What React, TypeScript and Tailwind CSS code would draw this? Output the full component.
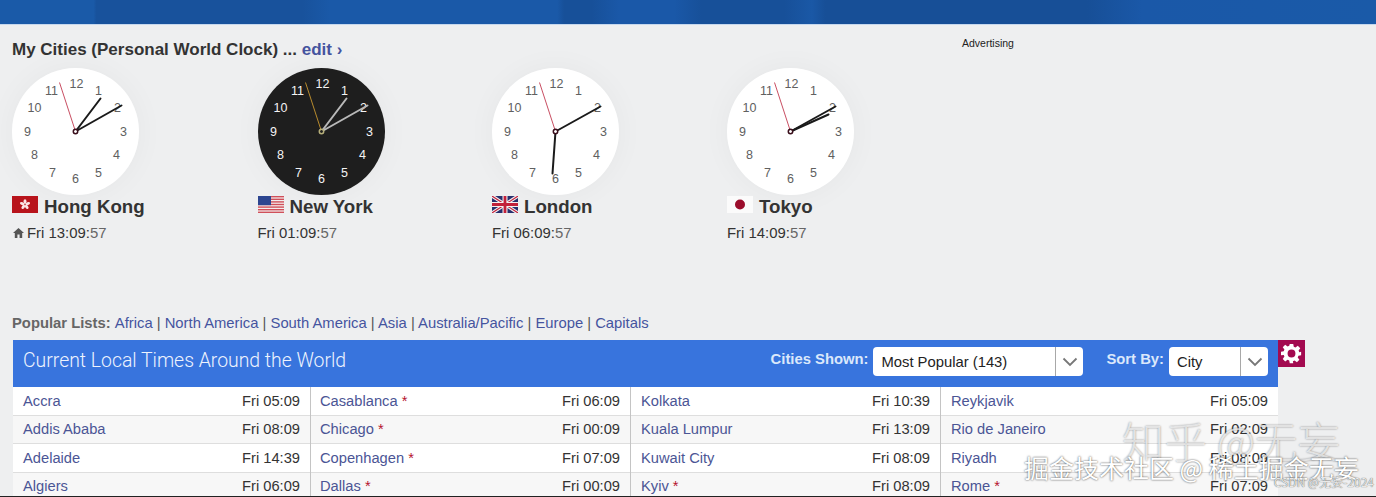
import React from "react";

type P = [number, number];
const numbers: [string, number, number][] = [
  ["12", 1, -48], ["1", 23, -41], ["2", 42, -24], ["3", 48, 0], ["4", 41, 23], ["5", 23, 41],
  ["6", 0, 47], ["7", -23, 41], ["8", -41, 23], ["9", -48, 0], ["10", -41, -24], ["11", -24, -41],
];

function Clock({ dark, hour, minute, second }: { dark?: boolean; hour: P; minute: P; second: P }) {
  const hand = dark ? "#b9b9b9" : "#1a1a1a";
  return (
    <div className="w-[127px] h-[127px] rounded-full shadow-[0_0_30px_rgba(0,0,0,0.04)]">
      <svg width="127" height="127" viewBox="-63.5 -63.5 127 127" className="block">
        <circle r="63.5" fill={dark ? "#1e1e1e" : "#ffffff"} />
        {numbers.map(([t, x, y]) => (
          <text key={t} x={x} y={y + 4.5} textAnchor="middle" fontSize="12.5" fontFamily="'Liberation Sans', Arial, sans-serif" fill={dark ? "#f4f4f4" : "#606060"}>
            {t}
          </text>
        ))}
        <line x1="0" y1="0" x2={hour[0]} y2={hour[1]} stroke={hand} strokeWidth="2" strokeLinecap="round" />
        <line x1="0" y1="0" x2={minute[0]} y2={minute[1]} stroke={hand} strokeWidth="2" strokeLinecap="round" />
        <line x1="0" y1="0" x2={second[0]} y2={second[1]} stroke={dark ? "#c9972f" : "#c23a50"} strokeWidth="0.9" />
        <circle r="2.2" fill={dark ? "#1e1e1e" : "#ffffff"} stroke={dark ? "#b5ae7a" : "#3a0f1c"} strokeWidth="1.5" />
      </svg>
    </div>
  );
}

function HK() {
  return (
    <svg width="26" height="17" viewBox="0 0 26 17" className="block">
      <rect width="26" height="17" fill="#b8141c" />
      <g fill="#fbe6e6">
        {[0, 72, 144, 216, 288].map((a) => (
          <ellipse key={a} cx="13" cy="5.6" rx="1.5" ry="2.4" transform={`rotate(${a} 13 8.5)`} />
        ))}
      </g>
    </svg>
  );
}
function US() {
  return (
    <svg width="26" height="17" viewBox="0 0 26 17" className="block">
      <rect width="26" height="17" fill="#f4eeee" />
      {[0, 2.6, 5.2, 7.8, 10.4, 13, 15.6].map((y) => (
        <rect key={y} y={y} width="26" height="1.4" fill="#d0505a" />
      ))}
      <rect width="13" height="9.2" fill="#2c4590" />
    </svg>
  );
}
function UK() {
  return (
    <svg width="26" height="17" viewBox="0 0 26 17" className="block">
      <rect width="26" height="17" fill="#27306e" />
      <path d="M0 0L26 17M26 0L0 17" stroke="#f3f0f0" strokeWidth="3.4" />
      <path d="M0 0L26 17M26 0L0 17" stroke="#c2203a" strokeWidth="1.1" />
      <path d="M13 0V17M0 8.5H26" stroke="#f3f0f0" strokeWidth="5" />
      <path d="M13 0V17M0 8.5H26" stroke="#c2203a" strokeWidth="2.8" />
    </svg>
  );
}
function JP() {
  return (
    <svg width="26" height="17" viewBox="0 0 26 17" className="block">
      <rect width="26" height="17" fill="#fbfbfb" />
      <circle cx="13" cy="8.5" r="5" fill="#9b0d2c" />
    </svg>
  );
}

const cities = [
  { w: "w-[245.5px]", name: "Hong Kong", flag: <HK />, time: "Fri 13:09", home: true, hour: [25, -33] as P, minute: [46, -26] as P, second: [-16, -49] as P },
  { w: "w-[234.5px]", name: "New York", flag: <US />, time: "Fri 01:09", dark: true, hour: [25, -33] as P, minute: [46, -26] as P, second: [-16, -49] as P },
  { w: "w-[235px]", name: "London", flag: <UK />, time: "Fri 06:09", hour: [-3, 42] as P, minute: [45, -25] as P, second: [-16, -49] as P },
  { w: "w-[235px]", name: "Tokyo", flag: <JP />, time: "Fri 14:09", hour: [38, -17] as P, minute: [45, -25] as P, second: [-16, -49] as P },
];

const lists = ["Africa", "North America", "South America", "Asia", "Australia/Pacific", "Europe", "Capitals"];

const columns: { w: string; pad: string; rows: [string, boolean, string][] }[] = [
  { w: "w-[298px]", pad: "pl-[10px] pr-[10px]", rows: [["Accra", false, "Fri 05:09"], ["Addis Ababa", false, "Fri 08:09"], ["Adelaide", false, "Fri 14:39"], ["Algiers", false, "Fri 06:09"]] },
  { w: "w-[320px]", pad: "pl-[9px] pr-[10px]", rows: [["Casablanca", true, "Fri 06:09"], ["Chicago", true, "Fri 00:09"], ["Copenhagen", true, "Fri 07:09"], ["Dallas", true, "Fri 00:09"]] },
  { w: "w-[310px]", pad: "pl-[10px] pr-[10px]", rows: [["Kolkata", false, "Fri 10:39"], ["Kuala Lumpur", false, "Fri 13:09"], ["Kuwait City", false, "Fri 08:09"], ["Kyiv", true, "Fri 08:09"]] },
  { w: "flex-1", pad: "pl-[10px] pr-[10px]", rows: [["Reykjavik", false, "Fri 05:09"], ["Rio de Janeiro", false, "Fri 02:09"], ["Riyadh", false, "Fri 08:09"], ["Rome", true, "Fri 07:09"]] },
];

function Select({ w, label }: { w: string; label: string }) {
  return (
    <div className={`${w} h-[29px] bg-white rounded-[4px] flex items-center text-[#222] text-[14.8px]`}>
      <span className="flex-1 pl-2 pt-[1px] whitespace-nowrap">{label}</span>
      <span className="w-[28px] h-full border-l border-[#a8a8a8] flex items-center justify-center">
        <svg width="16" height="10" viewBox="0 0 16 10" fill="none" stroke="#777" strokeWidth="1.8">
          <path d="M1.500 1.500l6.500 6.500 6.500-6.500" />
        </svg>
      </span>
    </div>
  );
}

export default function App() {
  return (
    <div className="relative w-[1376px] h-[497px] overflow-hidden bg-[#eeeff0] font-['Liberation_Sans',Arial,sans-serif] text-[#333]">
      <div className="h-[25px] bg-[linear-gradient(90deg,#1a5aa8_0%,#1a5aa8_6.800%,#18529c_7%,#18529c_22%,#1a59a8_24%,#1a59a8_40.500%,#175099_41%,#175099_43%,#1a58a8_45%,#1a58a8_49%,#175099_51%,#175099_57%,#1a58a6_59%,#174f97_60%,#174f97_79%,#1a58a8_83%,#1a5aa8_100%)] border-b border-[#c6d8ee]" />

      <div className="pl-[12px] flex">
        <div className="w-[950px]">
          <h2 className="mt-[15px] h-[20px] leading-[20px] text-[17px] font-bold text-[#333] whitespace-nowrap">
            My Cities (Personal World Clock) ... <span className="text-[#45549f]">edit ›</span>
          </h2>
          <div className="flex mt-[8px]">
            {cities.map((c) => (
              <div key={c.name} className={c.w}>
                <Clock dark={c.dark} hour={c.hour} minute={c.minute} second={c.second} />
                <div className="flex items-center gap-[6px] h-[24px]">
                  <span className="-mt-[5px]">{c.flag}</span>
                  <span className="text-[18.7px] font-bold text-[#333] whitespace-nowrap">{c.name}</span>
                </div>
                <div className="flex items-center h-[24px] mt-[2px] text-[14.9px] text-[#333] whitespace-nowrap">
                  {c.home && (
                    <svg width="13" height="12" viewBox="0 0 13 12" className="mr-[2px]" fill="#555">
                      <path d="M6.500 1L1 6h1.800v5h2.600V7.600h2.200V11h2.600V6H12z" />
                    </svg>
                  )}
                  {c.time}:<span className="text-[#666]">57</span>
                </div>
              </div>
            ))}
          </div>
        </div>
        <div className="mt-[11px] text-[10.5px] text-[#222]">Advertising</div>
      </div>

      <div className="absolute left-0 top-[314px] w-full">
        <div className="pl-[12px] h-[18px] leading-[18px] text-[14.8px] text-[#45549f] whitespace-nowrap">
          <span className="font-bold text-[#666]">Popular Lists: </span>
          {lists.map((l, i) => (
            <span key={l}>
              {i > 0 && <span className="text-[#555]"> | </span>}
              {l}
            </span>
          ))}
        </div>
        <div className="mt-[8px] ml-[13px] w-[1265px] relative">
          <div className="h-[47px] bg-[#3874dd] flex items-start pt-[7px] pl-[10px] pr-[10px]">
            <span className="flex-1 text-[19.4px] leading-[27px] font-light font-['Roboto',sans-serif] text-[#eef3fd] whitespace-nowrap">Current Local Times Around the World</span>
            <span className="text-[14.8px] leading-[24px] font-bold text-[#dbe8fb] mr-[5px]">Cities Shown:</span>
            <Select w="w-[210px]" label="Most Popular (143)" />
            <span className="text-[14.8px] leading-[24px] font-bold text-[#dbe8fb] ml-[23px] mr-[5px]">Sort By:</span>
            <Select w="w-[99px]" label="City" />
          </div>
          <div className="absolute left-full top-0 w-[27px] h-[27px] bg-[#a30a50] flex items-center justify-center">
            <svg width="21" height="21" viewBox="0 0 24 24" fill="#fff">
              <path fillRule="evenodd" d="M10 1h4l.6 3.200 1.900.8 2.700-1.900 2.800 2.800-1.900 2.700.8 1.900L23 10v4l-3.100.6-.8 1.900 1.900 2.700-2.800 2.800-2.700-1.900-1.900.8L14 23h-4l-.6-3.100-1.900-.8-2.700 1.900-2.800-2.800 1.900-2.700-.8-1.900L0 14v-4l3.100-.6.8-1.900L2 4.800 4.800 2l2.700 1.900 1.900-.8zM12 7.500a4.500 4.500 0 1 0 0 9 4.500 4.500 0 0 0 0-9z" />
            </svg>
          </div>
          <div className="flex bg-white">
            {columns.map((col, ci) => (
              <div key={ci} className={`${col.w} ${ci < 3 ? "border-r border-[#c4c4c4]" : ""}`}>
                {col.rows.map(([city, star, time], ri) => (
                  <div key={city} className={`h-[28.5px] flex items-center justify-between ${col.pad} border-b border-[#dedede] text-[14.7px] ${ri % 2 === 1 ? "bg-[#f7f7f7]" : "bg-white"}`}>
                    <span className="text-[#4b5595] whitespace-nowrap">
                      {city}
                      {star && <span className="text-[#b5132e]"> *</span>}
                    </span>
                    <span className="text-[#333] whitespace-nowrap">{time}</span>
                  </div>
                ))}
              </div>
            ))}
          </div>
        </div>
      </div>

      <div className="absolute left-0 right-0 bottom-0 h-[1.500px] bg-[#222]" />

      <div className="absolute left-[1122px] top-[415px] text-[42.5px] leading-[50px] font-light text-white/70 whitespace-nowrap font-['Noto_Sans_CJK_SC',sans-serif] [text-shadow:0_0_2px_rgba(0,0,0,0.45)]">
        知乎 @无妄
      </div>
      <div className="absolute left-[1024px] top-[452px] text-[25px] leading-[30px] text-white whitespace-nowrap font-['Noto_Sans_CJK_SC',sans-serif] [text-shadow:0_0_2px_rgba(0,0,0,0.8)]">
        掘金技术社区 @ 稀土掘金无妄
      </div>
      <div className="absolute right-[2px] top-[475px] text-[12px] leading-[14px] text-[#e8e8e8] whitespace-nowrap font-['Noto_Sans_CJK_SC',sans-serif] [text-shadow:0_0_1px_rgba(0,0,0,0.8)]">
        CSDN @无妄-2024
      </div>
    </div>
  );
}
